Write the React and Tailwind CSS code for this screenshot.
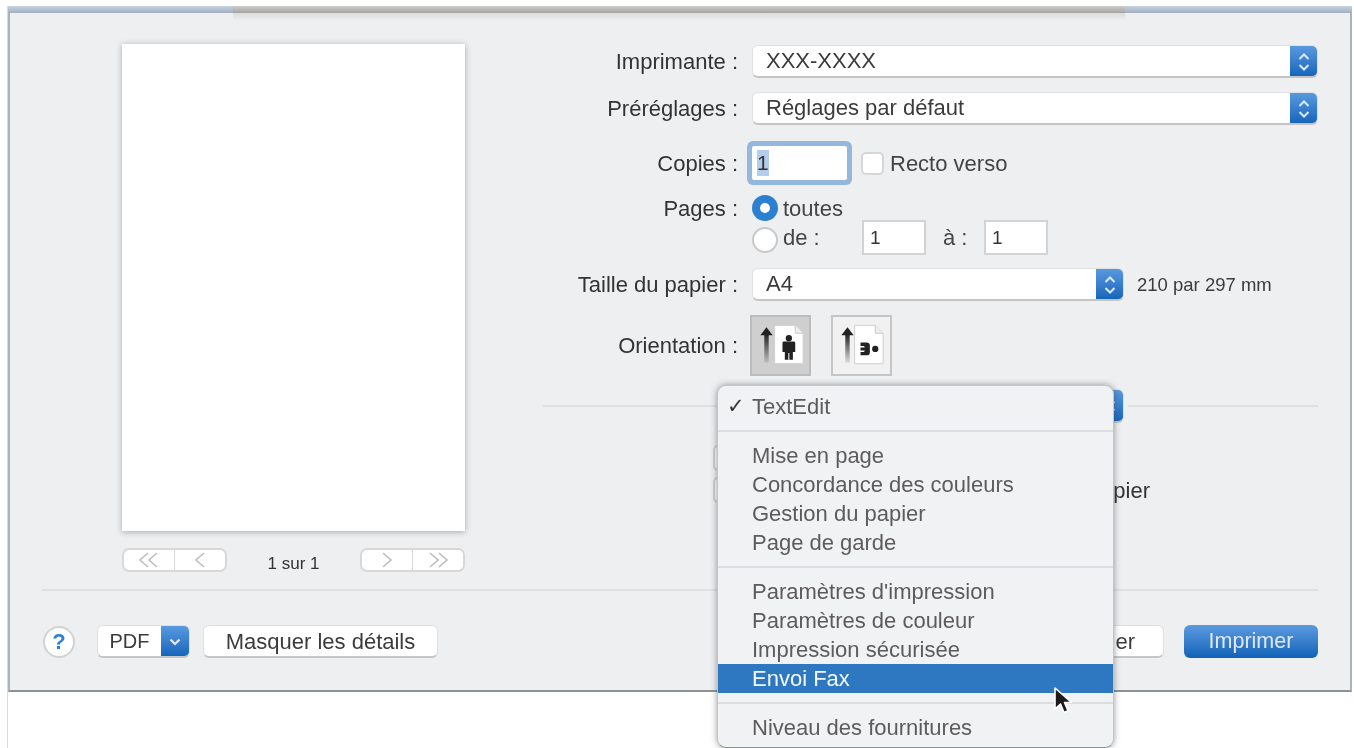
import React from "react";

const Stepper = () => (
  <svg width="14" height="22" viewBox="0 0 14 22" fill="none" stroke="#dbe8f8" strokeWidth="2">
    <polyline points="2.5,8 7,3.5 11.5,8" />
    <polyline points="2.5,14 7,18.5 11.5,14" />
  </svg>
);

const Select = ({ children, className = "" }) => (
  <div className={`flex h-[33px] rounded-[6px] bg-white border border-[#e0e0e0] border-b-2 border-b-[#c4c4c4] overflow-hidden ${className}`}>
    <span className="flex-1 pl-[13px] leading-[29px] text-[#3b3b3b]">{children}</span>
    <span className="-my-px -mb-[2px] w-[27px] shrink-0 flex items-center justify-center bg-linear-to-b from-[#5a9be0] to-[#0d62b8]">
      <Stepper />
    </span>
  </div>
);

const Radio = ({ on }) =>
  on ? (
    <span className="w-[26px] h-[26px] rounded-full bg-[#2b80cf] flex items-center justify-center shrink-0">
      <span className="w-[10px] h-[10px] rounded-full bg-white" />
    </span>
  ) : (
    <span className="w-[26px] h-[26px] mt-[4px] rounded-full bg-white border-2 border-[#c9c9c9] shrink-0" />
  );

const Row = ({ label, className = "", children }) => (
  <div className={`flex items-center ${className}`}>
    <span className="w-[195px] shrink-0 text-right text-[#333] whitespace-nowrap">{label}</span>
    <div className="flex-1 ml-[14px] min-w-0">{children}</div>
  </div>
);

const Field = ({ className = "" }) => (
  <span className={`h-[35px] w-[64px] bg-white border-2 border-[#d3d3d3] pl-[6px] leading-[31px] text-[19px] text-[#333] ${className}`}>1</span>
);

const Arrow = () => (
  <>
    <rect x="12.5" y="17" width="4.5" height="29" fill="url(#tail)" />
    <polygon points="14.75,10 8.5,18 21,18" fill="#222" />
  </>
);

const Sheet = ({ x }) => (
  <>
    <path d={`M${x} 8 h21 l8 8 v31 h-29 z`} fill="#fff" stroke="#cfcfcf" strokeWidth="1" />
    <path d={`M${x + 21} 8 v8 h8`} fill="#eee" stroke="#c8c8c8" strokeWidth="1" />
  </>
);

const Portrait = () => (
  <svg width="58" height="58" viewBox="0 0 58 58">
    <defs>
      <linearGradient id="tail" x1="0" y1="0" x2="0" y2="1">
        <stop offset="0" stopColor="#222" />
        <stop offset="1" stopColor="#222" stopOpacity="0.1" />
      </linearGradient>
    </defs>
    <Arrow />
    <Sheet x={23} />
    <circle cx="37.5" cy="21" r="3.2" fill="#222" />
    <path d="M31 26 q0 -1.5 2 -1.5 h9 q2 0 2 1.5 v9 h-2.4 v8 h-3.6 v-7 h-1 v7 h-3.6 v-8 h-2.4 z" fill="#222" />
  </svg>
);

const Landscape = () => (
  <svg width="58" height="58" viewBox="0 0 58 58">
    <Arrow />
    <Sheet x={22} />
    <circle cx="43" cy="32" r="3.2" fill="#222" />
    <path d="M28 25.5 h6 q3.5 0 3.5 3 v7 q0 3 -3.5 3 h-6 v-3.5 h3.5 l1 -1.5 h-4.5 v-3 h4.5 l-1 -1.5 h-3.5 z" fill="#222" />
  </svg>
);

const Chevrons = ({ dir, two }) => (
  <svg width="30" height="18" viewBox="0 0 30 18" fill="none" stroke="#bdbdbd" strokeWidth="1.6">
    {dir === "left" ? (
      <>
        <polyline points={two ? "14,2 6,9 14,16" : "19,2 11,9 19,16"} />
        {two && <polyline points="23,2 15,9 23,16" />}
      </>
    ) : (
      <>
        <polyline points={two ? "7,2 15,9 7,16" : "11,2 19,9 11,16"} />
        {two && <polyline points="16,2 24,9 16,16" />}
      </>
    )}
  </svg>
);

const Pager = ({ dir }) => (
  <div className="flex w-[105px] h-[24px] rounded-[7px] bg-white border-2 border-[#d8d8d8] overflow-hidden">
    <span className="flex-1 flex items-center justify-center border-r border-[#d8d8d8]">
      <Chevrons dir={dir} two={dir === "left"} />
    </span>
    <span className="flex-1 flex items-center justify-center">
      <Chevrons dir={dir} two={dir !== "left"} />
    </span>
  </div>
);

const Button = ({ className = "", children }) => (
  <span className={`h-[33px] rounded-[6px] bg-white border border-[#e0e0e0] border-b-2 border-b-[#c6c6c6] flex items-center text-[#3b3b3b] ${className}`}>
    {children}
  </span>
);

const menuGroups = [
  ["Mise en page", "Concordance des couleurs", "Gestion du papier", "Page de garde"],
  ["Paramètres d'impression", "Paramètres de couleur", "Impression sécurisée", "Envoi Fax"],
  ["Niveau des fournitures"],
];

const MenuSep = () => (
  <div className="h-[20px] flex items-center">
    <div className="h-[2px] w-full bg-[#dcdde0]" />
  </div>
);

const Menu = () => (
  <div className="absolute left-[717px] top-[385px] w-[397px] h-[363px] pt-[6px] rounded-[9px] bg-[#f1f2f4] border border-[#c4c5c9] border-b-[#8b8f98] shadow-[0_0_6px_rgba(70,70,80,0.55)] text-[#5d5b5b] text-[22px]">
    <div className="h-[29px] flex items-center">
      <span className="w-[34px] pl-[9px] text-[21px] font-bold text-[#333] font-['DejaVu_Sans',sans-serif]">✓</span>
      TextEdit
    </div>
    {menuGroups.map((group) => (
      <div key={group[0]}>
        <MenuSep />
        {group.map((item) =>
          item === "Envoi Fax" ? (
            <div key={item} className="h-[29px] leading-[29px] pl-[34px] bg-[#2e78c2] text-[#f4f8fc]">
              {item}
            </div>
          ) : (
            <div key={item} className="h-[29px] leading-[29px] pl-[34px]">
              {item}
            </div>
          )
        )}
      </div>
    ))}
  </div>
);

const Cursor = () => (
  <svg className="absolute left-[1052px] top-[685px]" width="24" height="32" viewBox="0 0 24 32">
    <path d="M3 3 v21 l5.5 -5 l3.5 8.5 l4 -1.7 l-3.5 -8.3 h7 z" fill="#1d1a1a" stroke="#fff" strokeWidth="1.6" strokeLinejoin="round" />
  </svg>
);

export default function App() {
  return (
    <div className="relative w-[1354px] h-[748px] overflow-hidden bg-white pl-[7px] pt-[6px] blur-[0.5px] font-['Liberation_Sans',Arial,sans-serif] text-[22px]">
      <div className="absolute left-[7px] top-[6px] bottom-0 w-px bg-[#d3dcea]" />
      <div className="relative ml-px w-[1344px] h-[686px] flex flex-col bg-[#eeeff1] border-x-2 border-x-[#a9b2c0] border-b-2 border-b-[#8c9097]">
        {/* title bar remains */}
        <div className="flex h-[7px] shrink-0 -mx-[2px]">
          <div className="w-[225px] bg-linear-to-b from-[#c8d3e2] to-[#a3aebf]" />
          <div className="w-[892px] bg-linear-to-b from-[#cfcdcb] to-[#a5a3a1]" />
          <div className="flex-1 bg-linear-to-b from-[#c8d3e2] to-[#a3aebf]" />
        </div>
        <div className="absolute left-[223px] top-[7px] w-[892px] h-[8px] bg-linear-to-b from-[#00000014] to-transparent" />

        <div className="flex h-[577px] shrink-0">
          <div className="ml-[112px] w-[343px] shrink-0 pt-[31px]">
            <div className="h-[487px] bg-white shadow-[0_1px_6px_rgba(0,0,0,0.3)]" />
            <div className="mt-[17px] flex items-start justify-between">
              <Pager dir="left" />
              <span className="text-[17px] mt-[3px] text-[#333]">1 sur 1</span>
              <Pager dir="right" />
            </div>
          </div>

          <div className="ml-[78px] w-[775px] pt-[32px]">
            <Row label="Imprimante :">
              <Select>XXX-XXXX</Select>
            </Row>
            <Row label="Préréglages :" className="mt-[14px]">
              <Select>Réglages par défaut</Select>
            </Row>
            <Row label="Copies :" className="mt-[21px] h-[34px]">
              <div className="flex items-center">
                <span className="h-[34px] w-[95px] bg-white ring-[5px] ring-[#95b6dd] rounded-[2px] pl-[5px] flex items-center text-[#333] text-[21px]">
                  <span className="bg-[#b4cdec] h-[26px] leading-[26px]">1</span>
                </span>
                <span className="ml-[14px] w-[23px] h-[23px] rounded-[5px] bg-white border-2 border-[#d6d6d6]" />
                <span className="ml-[6px] text-[#444]">Recto verso</span>
              </div>
            </Row>
            <Row label="Pages :" className="mt-[15px] h-[26px]">
              <div className="flex items-center">
                <Radio on />
                <span className="ml-[5px] text-[#444]">toutes</span>
              </div>
            </Row>
            <div className="-mt-px flex items-center h-[35px] ml-[209px]">
              <Radio />
              <span className="ml-[5px] text-[#444] w-[79px]">de :</span>
              <Field />
              <span className="ml-[17px] w-[41px] text-[#444]">à :</span>
              <Field />
            </div>
            <Row label="Taille du papier :" className="mt-[13px]">
              <div className="flex items-center">
                <Select className="w-[372px]">A4</Select>
                <span className="ml-[13px] text-[18.5px] text-[#3b3b3b] whitespace-nowrap">210 par 297 mm</span>
              </div>
            </Row>
            <Row label="Orientation :" className="mt-[14px] h-[61px]">
              <div className="flex gap-[20px] -ml-[2px]">
                <span className="w-[61px] h-[61px] bg-[#cfcfcf] border-2 border-[#bcbcbc] flex items-center justify-center">
                  <Portrait />
                </span>
                <span className="w-[61px] h-[61px] bg-[#f1f1f1] border-2 border-[#c6c6c6] flex items-center justify-center">
                  <Landscape />
                </span>
              </div>
            </Row>
            <div className="mt-[13px] flex items-center h-[34px]">
              <div className="h-[2px] w-[205px] bg-[#dfdfe1]" />
              <Select className="mx-[4px] w-[372px] h-[34px]" />
              <div className="h-[2px] flex-1 bg-[#dfdfe1]" />
            </div>
            <div className="mt-[22px] ml-[170px] w-[24px] h-[26px] rounded-[5px] bg-white border-2 border-[#cfcfcf]" />
            <div className="mt-[6px] ml-[170px] w-[437px] h-[26px] flex items-center justify-between">
              <span className="w-[24px] h-[26px] rounded-[5px] bg-white border-2 border-[#cfcfcf]" />
              <span className="text-[#333] whitespace-nowrap">pier</span>
            </div>
          </div>
        </div>

        <div className="mx-[32px] h-[2px] -mt-[1px] bg-[#e0e0e2]" />

        <div className="flex items-center pt-[34px] pl-[33px] pr-[32px]">
          <span className="w-[32px] h-[32px] rounded-full bg-white border-2 border-[#d2d2d2] flex items-center justify-center font-bold text-[#2b80cf]">?</span>
          <div className="ml-[22px] flex w-[93px] h-[33px] rounded-[6px] bg-white border border-[#e0e0e0] border-b-2 border-b-[#c6c6c6] overflow-hidden text-[#3b3b3b]">
            <span className="flex-1 text-center text-[20px] leading-[30px]">PDF</span>
            <span className="-my-px -mb-[2px] w-[28px] flex items-center justify-center bg-linear-to-b from-[#5a9be0] to-[#0d62b8]">
              <svg width="12" height="8" viewBox="0 0 12 8" fill="none" stroke="#e4eefa" strokeWidth="2.2">
                <polyline points="1.5,1.5 6,6 10.5,1.5" />
              </svg>
            </span>
          </div>
          <Button className="ml-[13px] w-[235px] justify-center">Masquer les détails</Button>
          <Button className="ml-auto w-[122px] justify-end pr-[28px]">er</Button>
          <span className="ml-[20px] w-[134px] h-[33px] rounded-[6px] flex items-center justify-center text-[21.5px] text-[#dfe9f6] bg-linear-to-b from-[#5a9be0] to-[#0d62b8]">
            Imprimer
          </span>
        </div>
      </div>

      <Menu />
      <Cursor />
    </div>
  );
}
